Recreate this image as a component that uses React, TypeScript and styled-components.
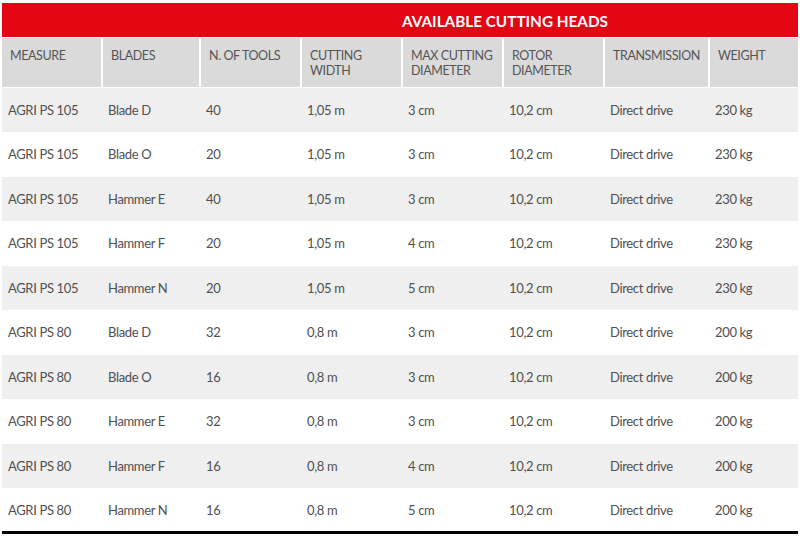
import React from "react";
import styled, { createGlobalStyle } from "styled-components";

const Global = createGlobalStyle`
  html, body { margin: 0; padding: 0; background: #ffffff; }
  body { font-family: Lato, "Open Sans", sans-serif; }
`;

const Wrap = styled.div`
  padding: 3px 2px 0 2px;
  width: 800px;
  box-sizing: border-box;
`;

const Table = styled.table`
  width: 796px;
  border-collapse: collapse;
  table-layout: fixed;
  border-bottom: 3px solid #000;
`;

const TitleCell = styled.th`
  background: #e30613;
  color: #ffffff;
  height: 34px;
  padding: 0;
  text-align: left;
  font-family: Lato, sans-serif;
  font-weight: 700;
  font-size: 15.3px;
  vertical-align: middle;
`;

const TitleText = styled.span`
  display: block;
  padding-left: 400px;
  padding-top: 1px;
`;

const HeadCell = styled.th<{ $first?: boolean }>`
  background: #dadada;
  color: #555555;
  height: 50px;
  padding: 10px 0 0 8px;
  box-sizing: border-box;
  text-align: left;
  vertical-align: top;
  font-weight: 400;
  font-size: 12.5px;
  letter-spacing: -0.4px;
  line-height: 15px;
  border-left: ${(p) => (p.$first ? "0" : "2px solid #ffffff")};
  border-top: 1px solid #ffffff;
  border-bottom: 1px solid #ffffff;
`;

const Row = styled.tr<{ $alt: boolean }>`
  background: ${(p) => (p.$alt ? "#efefef" : "#ffffff")};
`;

const Cell = styled.td`
  height: 44.5px;
  padding: 0 0 0 6px;
  box-sizing: border-box;
  color: #505050;
  font-size: 13px;
  letter-spacing: -0.35px;
  vertical-align: middle;
  white-space: nowrap;
`;

const widths = [100, 98, 101, 101, 101, 101, 105, 89];

const headers = [
  ["MEASURE"],
  ["BLADES"],
  ["N. OF TOOLS"],
  ["CUTTING", "WIDTH"],
  ["MAX CUTTING", "DIAMETER"],
  ["ROTOR", "DIAMETER"],
  ["TRANSMISSION"],
  ["WEIGHT"],
];

const rows: string[][] = [
  ["AGRI PS 105", "Blade D", "40", "1,05 m", "3 cm", "10,2 cm", "Direct drive", "230 kg"],
  ["AGRI PS 105", "Blade O", "20", "1,05 m", "3 cm", "10,2 cm", "Direct drive", "230 kg"],
  ["AGRI PS 105", "Hammer E", "40", "1,05 m", "3 cm", "10,2 cm", "Direct drive", "230 kg"],
  ["AGRI PS 105", "Hammer F", "20", "1,05 m", "4 cm", "10,2 cm", "Direct drive", "230 kg"],
  ["AGRI PS 105", "Hammer N", "20", "1,05 m", "5 cm", "10,2 cm", "Direct drive", "230 kg"],
  ["AGRI PS 80", "Blade D", "32", "0,8 m", "3 cm", "10,2 cm", "Direct drive", "200 kg"],
  ["AGRI PS 80", "Blade O", "16", "0,8 m", "3 cm", "10,2 cm", "Direct drive", "200 kg"],
  ["AGRI PS 80", "Hammer E", "32", "0,8 m", "3 cm", "10,2 cm", "Direct drive", "200 kg"],
  ["AGRI PS 80", "Hammer F", "16", "0,8 m", "4 cm", "10,2 cm", "Direct drive", "200 kg"],
  ["AGRI PS 80", "Hammer N", "16", "0,8 m", "5 cm", "10,2 cm", "Direct drive", "200 kg"],
];

export default function App() {
  return (
    <>
      <Global />
      <Wrap>
        <Table>
          <colgroup>
            {widths.map((w, i) => (
              <col key={i} style={{ width: w }} />
            ))}
          </colgroup>
          <thead>
            <tr>
              <TitleCell colSpan={8}>
                <TitleText>AVAILABLE CUTTING HEADS</TitleText>
              </TitleCell>
            </tr>
            <tr>
              {headers.map((h, i) => (
                <HeadCell key={i} $first={i === 0}>
                  {h.map((line, j) => (
                    <React.Fragment key={j}>
                      {j > 0 && <br />}
                      {line}
                    </React.Fragment>
                  ))}
                </HeadCell>
              ))}
            </tr>
          </thead>
          <tbody>
            {rows.map((r, i) => (
              <Row key={i} $alt={i % 2 === 0}>
                {r.map((c, j) => (
                  <Cell key={j}>{c}</Cell>
                ))}
              </Row>
            ))}
          </tbody>
        </Table>
      </Wrap>
    </>
  );
}
